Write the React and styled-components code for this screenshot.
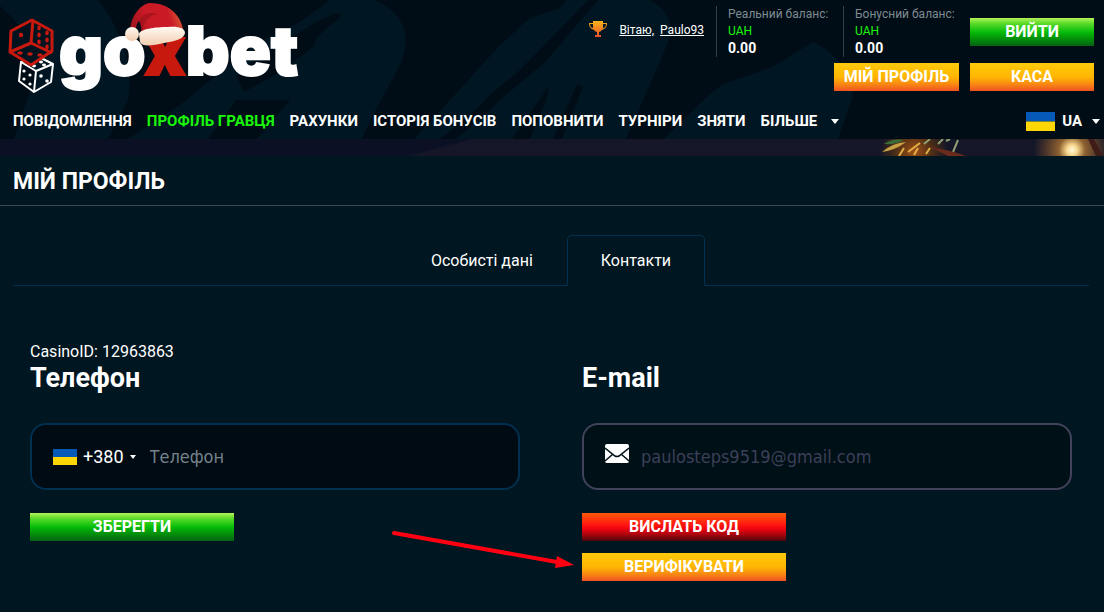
import React from 'react'
import styled, { createGlobalStyle, css } from 'styled-components'

const navItems = ['Повідомлення', 'Профіль гравця', 'Рахунки', 'Історія бонусів', 'Поповнити', 'Турніри', 'Зняти']

const Flag = ({ width, height }) => (
  <FlagSvg width={width} height={height} viewBox='0 0 30 20' preserveAspectRatio='none' aria-hidden='true'>
    <rect width='30' height='10' fill='#0759b8' />
    <rect y='10' width='30' height='10' fill='#fdd704' />
  </FlagSvg>
)

const Logo = () => (
  <svg width='298' height='96' viewBox='6 0 298 96' role='img' aria-label='goxbet'>
    {/* white die */}
    <g fill='none' stroke='#fff' strokeWidth='2' strokeLinejoin='round'>
      <path d='M21 62 L39 57 L53 64 L51 82 L34 92 L19 81 Z' />
      <path d='M21 62 L36 71 L53 64 M36 71 L34 92' />
    </g>
    <g fill='#fff'>
      <ellipse cx='34' cy='66' rx='2' ry='1.4' /><ellipse cx='41' cy='62' rx='2' ry='1.4' /><ellipse cx='44' cy='65' rx='2' ry='1.4' />
      <circle cx='24' cy='71' r='1.6' /><circle cx='30' cy='75' r='1.6' /><circle cx='24' cy='79' r='1.6' /><circle cx='30' cy='84' r='1.6' />
      <circle cx='41' cy='76' r='1.8' /><circle cx='47' cy='81' r='1.8' />
    </g>
    {/* red die */}
    <path d='M32 20 L52 31 L52 51 L31 65 L10 52 L11 31 Z' fill='#00131e' stroke='#c8190f' strokeWidth='3' strokeLinejoin='round' />
    <path d='M33 20 L31 43 L10 52 M31 43 L52 53' fill='none' stroke='#c8190f' strokeWidth='3' strokeLinejoin='round' />
    <g fill='#c8190f'>
      <circle cx='21' cy='35' r='2.2' />
      <ellipse cx='39' cy='28' rx='1.8' ry='2.4' /><ellipse cx='47' cy='33' rx='1.8' ry='2.4' />
      <ellipse cx='39' cy='35' rx='1.8' ry='2.4' /><ellipse cx='47' cy='40' rx='1.8' ry='2.4' />
      <ellipse cx='39' cy='42' rx='1.8' ry='2.4' /><ellipse cx='47' cy='47' rx='1.8' ry='2.4' />
      <ellipse cx='20' cy='53' rx='2.8' ry='1.8' /><ellipse cx='30' cy='54' rx='2.8' ry='1.8' /><ellipse cx='40' cy='55' rx='2.8' ry='1.8' />
    </g>
    <LogoText x='59' y='75'>go<LogoX>x</LogoX>bet</LogoText>
    {/* santa hat */}
    <defs>
      <linearGradient id='hat' x1='0' y1='0.4' x2='1' y2='0.2'>
        <stop offset='0' stopColor='#a5141c' />
        <stop offset='0.3' stopColor='#c91a26' />
        <stop offset='0.7' stopColor='#c91a26' />
        <stop offset='1' stopColor='#dd6a38' />
      </linearGradient>
      <linearGradient id='fur' x1='0' y1='0' x2='0' y2='1'>
        <stop offset='0' stopColor='#fffaf2' />
        <stop offset='1' stopColor='#f2cdb0' />
      </linearGradient>
    </defs>
    <path d='M130 31 C131 15 141 4 150 3 C168 3 180 14 183 29 L141 35 C142 27 141 23 139 21 C136 24 136 28 136 32 Z' fill='url(#hat)' />
    <path d='M139 21 C144 13 150 12 158 14 C150 15 144 20 142 32' fill='#8d0e17' opacity='0.5' />
    <path d='M139 34 C140 29 155 27 168 27 C178 26 185 28 185 33 C184 39 176 41 164 43 C152 46 142 47 140 42 Z' fill='url(#fur)' />
    <circle cx='132' cy='34' r='7' fill='url(#fur)' />
  </svg>
)

const App = () => {
  return (
    <>
      <GlobalStyle />
      <Page>
        <Header>
          <HeaderArt viewBox='0 0 1104 139' preserveAspectRatio='xMidYMid slice' aria-hidden='true'>
            <g fill='#001622'>
              <path d='M0 0 H98 C122 30 134 70 128 100 L108 139 H14 L34 80 C34 50 28 30 0 6 Z' />
              <path d='M330 0 H375 C402 12 412 34 402 60 C390 86 374 110 362 139 H257 L290 100 H236 L208 139 H128 L180 105 L235 60 C260 40 280 32 300 22 Z' />
              <path d='M566 0 H650 C674 14 674 30 664 52 L626 139 H414 L450 100 L500 45 L530 18 L560 8 Z' />
              <path d='M664 139 L712 92 C730 76 764 76 790 56 L813 42 C842 56 856 80 852 98 L838 139 Z' />
            </g>
            <g fill='#000d16'>
              <path d='M236 76 C260 52 290 40 316 22 L336 13 L342 14 C336 24 316 32 314 46 L280 72 L244 92 Z' />
              <path d='M598 0 H588 L520 70 L490 95 L480 106 L440 139 H456 L488 112 L500 100 L545 62 Z' />
              <path d='M549 86 L512 139 H530 L546 100 Z M577 84 L583 87 L562 139 H553 Z' />
            </g>
          </HeaderArt>
          <HeaderTop>
            <LogoLink href='#'><Logo /></LogoLink>
            <Account>
              <AccountRow>
                <Greeting>
                  <svg width='18' height='18' viewBox='0 0 18 18' aria-hidden='true'>
                    <defs>
                      <linearGradient id='cup' x1='0' y1='0' x2='0' y2='1'>
                        <stop offset='0' stopColor='#f8b419' />
                        <stop offset='1' stopColor='#e8502c' />
                      </linearGradient>
                    </defs>
                    <path d='M4 1 H14 V3 H18 C18 7 16 9 13 10 C12 11 11 12 10 12 V15 H12 V17 H6 V15 H8 V12 C7 12 6 11 5 10 C2 9 0 7 0 3 H4 Z M4 4 H1 C1 7 3 8 4 8 Z M14 4 V8 C15 8 17 7 17 4 Z' fill='url(#cup)' fillRule='evenodd' />
                  </svg>
                  <span><UserLink href='#'>Вітаю,</UserLink>&nbsp; <UserLink href='#'>Paulo93</UserLink></span>
                </Greeting>
                <Balance>
                  <BalanceLabel>Реальний баланс:</BalanceLabel>
                  <Currency>UAH</Currency>
                  <Amount>0.00</Amount>
                </Balance>
                <Balance>
                  <BalanceLabel>Бонусний баланс:</BalanceLabel>
                  <Currency>UAH</Currency>
                  <Amount>0.00</Amount>
                </Balance>
                <ExitWrap><Button $color='green' $width='124px'>Вийти</Button></ExitWrap>
              </AccountRow>
              <AccountButtons>
                <Button $color='orange' $width='125px'>Мій профіль</Button>
                <Button $color='orange' $width='124px'>Каса</Button>
              </AccountButtons>
            </Account>
          </HeaderTop>
          <Nav>
            {navItems.map((item, i) => (
              <NavLink key={item} href='#' $active={i === 1}>{item}</NavLink>
            ))}
            <MenuButton $gap='14px'>Більше<Caret /></MenuButton>
            <Language>
              <MenuButton $gap='7px'>
                <Flag width={29} height={19} />
                UA
                <Caret $spaced />
              </MenuButton>
            </Language>
          </Nav>
        </Header>
        <Banner>
          <svg width='228' height='17' viewBox='876 139 228 17' aria-hidden='true'>
            <defs>
              <radialGradient id='lamp' gradientUnits='userSpaceOnUse' cx='1072' cy='150' r='38'>
                <stop offset='0' stopColor='#fffbe0' />
                <stop offset='0.14' stopColor='#f8d68c' />
                <stop offset='0.35' stopColor='#8c6030' />
                <stop offset='0.7' stopColor='#49332a' />
                <stop offset='1' stopColor='#151729' />
              </radialGradient>
              <radialGradient id='ember' gradientUnits='userSpaceOnUse' cx='914' cy='152' r='34'>
                <stop offset='0' stopColor='#a04f18' />
                <stop offset='0.5' stopColor='#523014' />
                <stop offset='1' stopColor='#151729' />
              </radialGradient>
            </defs>
            <rect x='878' y='139' width='72' height='17' fill='url(#ember)' />
            <rect x='1034' y='139' width='70' height='17' fill='url(#lamp)' />
            <path d='M859 144 H876' />
            <path d='M884 144 Q892 138 904 140 Q896 145 884 144 Z' fill='#3c6b38' />
            <path d='M908 152 L920 143 M899 156 L904 148 M914 155 L918 148 M926 154 L930 148' stroke='#e0b044' strokeWidth='2' />
            <path d='M882 152 Q892 143 906 142 Q896 150 882 152 Z' fill='#c9a044' />
            <path d='M924 144 L930 139 M938 144 L943 139 M953 152 L958 140 M946 141 L950 139' stroke='#8f9f72' strokeWidth='2' />
            <path d='M930 147 Q950 150 966 156 H948 Z' fill='#6a2a1c' />
            <path d='M1088 139 H1094 L1103 156 H1096 Z' fill='#401c18' />
          </svg>
        </Banner>
        <TitleBar><Title>Мій профіль</Title></TitleBar>
        <Tabs role='tablist'>
          <Tab role='tab' aria-selected='false'>Особисті дані</Tab>
          <Tab role='tab' aria-selected='true' $active>Контакти</Tab>
        </Tabs>
        <Contacts>
          <Column>
            <CasinoId>CasinoID: 12963863</CasinoId>
            <Heading><label htmlFor='phone'>Телефон</label></Heading>
            <Field $border='#00304f' $bg='#000b14' $gap='14px'>
              <CountryButton type='button' aria-label='Код країни +380'>
                <Flag width={24} height={16} />
                +380
                <Caret $small />
              </CountryButton>
              <Input id='phone' type='tel' placeholder='Телефон' $placeholder='#75828a' />
            </Field>
            <Button $color='green' $width='204px'>Зберегти</Button>
          </Column>
          <Column>
            <CasinoId aria-hidden='true' />
            <Heading><label htmlFor='email'>E-mail</label></Heading>
            <Field $border='#42425a' $bg='#001017' $gap='12px'>
              <MailIcon width='24' height='20' viewBox='0 0 24 20' aria-hidden='true'>
                <rect width='24' height='19' rx='2' fill='#fff' />
                <path d='M0 4 L10 12 Q12 13 14 12 L24 4 M0 17 L8 10 M24 17 L16 10' fill='none' stroke='#001017' strokeWidth='1.5' />
              </MailIcon>
              <Input id='email' type='email' placeholder='paulosteps9519@gmail.com' $placeholder='#3c3f58' />
            </Field>
            <Button $color='red' $width='204px'>Вислать код</Button>
            <Button $color='orange' $width='204px'>Верифікувати</Button>
            <Arrow width='184' height='42' viewBox='0 0 184 42' aria-hidden='true'>
              <path d='M3 4 L166 33' stroke='#ff0012' strokeWidth='4' strokeLinecap='round' />
              <path d='M166 27 L183 36 L164 39 Z' fill='#ff0012' />
            </Arrow>
          </Column>
        </Contacts>
      </Page>
    </>
  )
}

export default App

const GlobalStyle = createGlobalStyle`
* {
  box-sizing: border-box;
}
body {
  margin: 0;
  background: #001620;
  color: #fff;
  font-family: Roboto, "Liberation Sans", sans-serif;
}
button, input {
  font-family: inherit;
}
`

const gradients = {
  green: '#b4f35a 0%, #5fdc2c 18%, #06bd0a 50%, #03a008 65%, #046313 100%',
  orange: '#ffcb0a 0%, #ffb602 50%, #f98a12 75%, #ef5223 100%',
  red: '#ff5a0a 0%, #ff1a10 40%, #f20410 55%, #b0060f 75%, #4d060b 100%',
}

const Page = styled.div`
min-height: 100vh;
overflow: hidden;
`

const Header = styled.header`
position: relative;
background: #000d16;
padding-bottom: 7px;
`

const HeaderArt = styled.svg`
position: absolute;
top: 0;
left: 0;
width: 100%;
height: 100%;
`

const HeaderTop = styled.div`
position: relative;
display: flex;
justify-content: space-between;
padding: 0 10px 0 6px;
height: 102px;
`

const LogoLink = styled.a`
display: block;
`

const Account = styled.div`
display: flex;
flex-direction: column;
align-items: flex-end;
gap: 6px;
padding-top: 6px;
`

const AccountRow = styled.div`
display: flex;
`

const Greeting = styled.div`
display: flex;
gap: 12px;
padding: 14px 12px 0 0;
font-size: 12px;
line-height: 20px;
`

const UserLink = styled.a`
color: #fff;
`

const Balance = styled.div`
width: 127px;
height: 51px;
padding-left: 11px;
border-left: 1px solid #333f47;
font-size: 12px;
line-height: 17px;
white-space: nowrap;
`

const BalanceLabel = styled.div`
color: #7f8b93;
`

const Currency = styled.div`
color: #1bf50a;
`

const Amount = styled.div`
font-size: 14px;
font-weight: 700;
`

const ExitWrap = styled.div`
padding-top: 12px;
`

const AccountButtons = styled.div`
display: flex;
gap: 11px;
`

const Button = styled.button`
display: block;
width: ${({ $width }) => $width};
height: 28px;
padding: 0;
border: 0;
background: linear-gradient(${({ $color }) => gradients[$color]});
color: #fff;
font-size: 16px;
font-weight: 700;
line-height: 28px;
text-transform: uppercase;
cursor: pointer;
`

const Nav = styled.nav`
position: relative;
display: flex;
align-items: center;
gap: 15px;
height: 30px;
padding: 8px 4px 0 13px;
font-size: 15px;
font-weight: 700;
text-transform: uppercase;
`

const NavLink = styled.a`
color: ${({ $active }) => ($active ? '#1bf50a' : '#fff')};
text-decoration: none;
white-space: nowrap;
`

const MenuButton = styled.button`
display: flex;
align-items: center;
gap: ${({ $gap }) => $gap};
padding: 0;
border: 0;
background: none;
color: #fff;
font-size: 15px;
font-weight: 700;
text-transform: uppercase;
`

const Caret = styled.i`
border: solid transparent;
border-width: ${({ $small }) => ($small ? '4px 3px 0' : '5px 4px 0')};
border-top-color: #fff;
${({ $spaced }) => $spaced && css`
  margin-left: 3px;
`}
`

const Language = styled.div`
margin-left: auto;
`

const FlagSvg = styled.svg`
display: block;
flex: none;
`

const LogoText = styled.text`
fill: #fff;
stroke: #fff;
stroke-width: 2px;
font-family: Inter, "Liberation Sans", sans-serif;
font-size: 68px;
font-weight: 900;
`

const LogoX = styled.tspan`
fill: #c8190f;
stroke: #c8190f;
`

const Banner = styled.div`
display: flex;
justify-content: flex-end;
height: 17px;
background: linear-gradient(165deg, #0c1024 40%, #151729 41%);
`

const TitleBar = styled.div`
height: 50px;
padding: 0 13px;
border-bottom: 1px solid #3b464c;
`

const Title = styled.h1`
margin: 0;
font-size: 23px;
font-weight: 700;
line-height: 52px;
text-transform: uppercase;
`

const Tabs = styled.div`
display: flex;
justify-content: center;
margin: 29px 15px 0 13px;
border-bottom: 1px solid #00304f;
`

const Tab = styled.button`
height: 51px;
margin-bottom: -1px;
padding: 0 33px;
border: 1px solid transparent;
border-radius: 5px 5px 0 0;
background: none;
color: #fff;
font-size: 16px;
${({ $active }) => $active && css`
  border-color: #00304f;
  border-bottom-color: #001620;
  background: #001620;
`}
`

const Contacts = styled.div`
display: grid;
grid-template-columns: 1fr 1fr;
padding: 56px 0 30px;
`

const Column = styled.section`
position: relative;
display: flex;
flex-direction: column;
align-items: flex-start;
gap: 12px;
padding: 0 32px 0 30px;
`

const CasinoId = styled.div`
height: 20px;
margin-bottom: -12px;
font-size: 16px;
line-height: 20px;
`

const Heading = styled.h2`
margin: 0 0 17px;
font-size: 27px;
font-weight: 700;
line-height: 32px;
`

const Field = styled.div`
display: flex;
align-items: center;
gap: ${({ $gap }) => $gap};
width: 100%;
height: 67px;
margin-bottom: 11px;
padding: 0 21px;
border: 2px solid ${({ $border }) => $border};
border-radius: 16px;
background: ${({ $bg }) => $bg};
`

const CountryButton = styled.button`
display: flex;
align-items: center;
gap: 6px;
padding: 0;
border: 0;
background: none;
color: #fff;
font-size: 18px;
`

const Input = styled.input`
flex: 1;
min-width: 0;
padding: 0;
border: 0;
outline: 0;
background: none;
color: #fff;
font-family: "DejaVu Sans Condensed", "Noto Sans", sans-serif;
font-size: 18px;
&::placeholder {
  color: ${({ $placeholder }) => $placeholder};
  opacity: 1;
}
`

const MailIcon = styled.svg`
flex: none;
margin-bottom: 6px;
`

const Arrow = styled.svg`
position: absolute;
right: 100%;
bottom: 10px;
margin-right: -23px;
pointer-events: none;
`
